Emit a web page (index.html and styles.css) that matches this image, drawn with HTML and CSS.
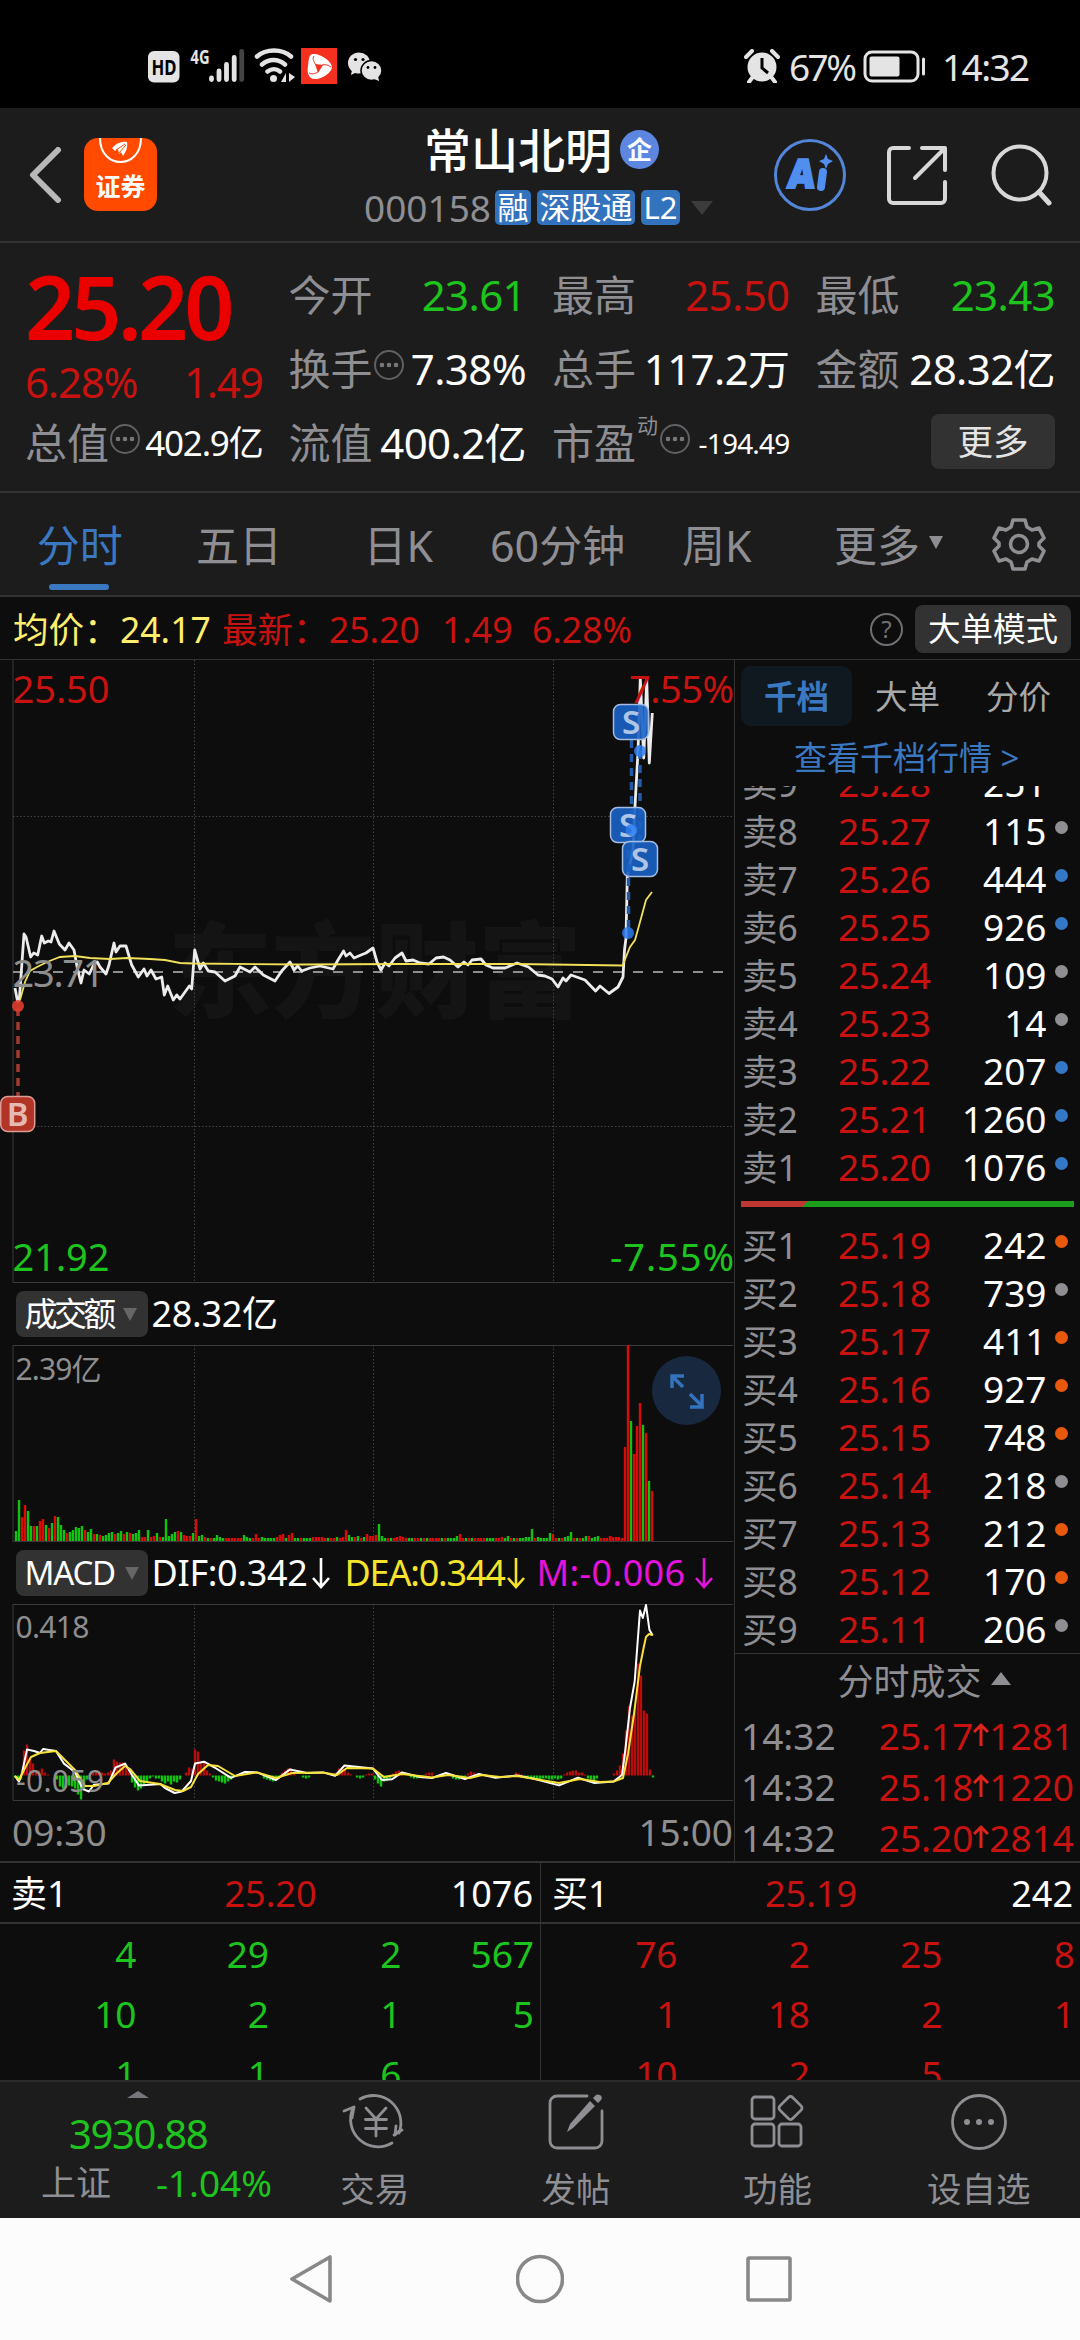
FILE: index.html
```
<!DOCTYPE html>
<html lang="zh-CN">
<head>
  <meta charset="UTF-8">
  <title>常山北明 000158</title>
  <link rel="stylesheet" href="styles.css">
</head>
<body>
  <div class="status-bar">
    <svg class="status-left" viewBox="140 40 260 50">
      <rect x="148" y="51" width="31.500" height="31.500" rx="6" fill="#e4e4e4"/>
      <text x="151.500" y="74.500" font-size="21" font-weight="700" fill="#000" textLength="25" lengthAdjust="spacingAndGlyphs">HD</text>
      <text x="190.500" y="63.500" font-size="20" font-weight="700" fill="#e4e4e4" textLength="19" lengthAdjust="spacingAndGlyphs">4G</text>
      <g stroke="#e4e4e4" stroke-width="4.800" stroke-linecap="round">
        <path d="M211.500 78v1.500M219 71v8.500M226.500 64.500v15M234.200 57.500v22"/>
        <path d="M241.700 51.500v28" stroke="#444"/>
      </g>
      <g fill="none" stroke="#e4e4e4" stroke-width="4.500" stroke-linecap="round">
        <path d="M257 56.500c9-8 25-8 34 0M262 64.500c7-6 16-6 23 0M267.500 71.500c4-3 9-3 12.500 0"/>
      </g>
      <circle cx="273.500" cy="78.500" r="3.500" fill="#e4e4e4"/>
      <path d="M286 73v9h-5zM289 82v-9l6 4z" fill="#e4e4e4"/>
      <rect x="301" y="48" width="36" height="36" fill="#f5301e"/>
      <path d="M312 54c9-1 20 8 20 13s-10 13-18 12c-6-1-7-7-6-13 1-5 0-10 4-12z" fill="#fff"/>
      <path d="M315 64l8 1-5 8z" fill="#f5301e"/>
      <path d="M309 73c4 2 8 0 10-2M314 56c-2 3 0 6 2 9M322 65c3-1 6 0 9 2" stroke="#f5301e" fill="none"/>
      <ellipse cx="359" cy="63" rx="11" ry="10.500" fill="#e4e4e4"/>
      <path d="M352 70l-1 5 6-3z" fill="#e4e4e4"/>
      <circle cx="355.500" cy="59.500" r="1.600"/><circle cx="363" cy="59.500" r="1.600"/>
      <ellipse cx="371.500" cy="70.500" rx="10.500" ry="10" fill="#e4e4e4" stroke="#000" stroke-width="1.500"/>
      <path d="M374 79l5 2-1-5z" fill="#e4e4e4"/>
      <circle cx="368" cy="67.500" r="1.400"/><circle cx="375" cy="67.500" r="1.400"/>
    </svg>
    <svg class="alarm" viewBox="0 0 36 34">
      <circle cx="18" cy="18" r="14.500" fill="#e4e4e4"/>
      <path d="M2 8l6-6M34 8l-6-6M8 29l-3 4M28 29l3 4" stroke="#e4e4e4" stroke-width="4" stroke-linecap="round"/>
      <path d="M18 9v10l6 5" stroke="#000" stroke-width="3" fill="none"/>
    </svg>
    <span class="battery-text">67%</span>
    <svg class="battery" viewBox="0 0 64 34">
      <rect x="2" y="2" width="53" height="29" rx="7" fill="none" stroke="#e4e4e4" stroke-width="3"/>
      <rect x="6.500" y="6.500" width="30" height="20" rx="2" fill="#e4e4e4"/>
      <path d="M60.500 9v15" stroke="#e4e4e4" stroke-width="3" stroke-linecap="round"/>
    </svg>
    <span class="clock">14:32</span>
  </div>

  <header class="header">
    <div class="header-left">
      <svg class="back" viewBox="0 0 34 56"><path d="M29 3L4 28l25 25" fill="none" stroke="#b8b8b8" stroke-width="6" stroke-linecap="round" stroke-linejoin="round"/></svg>
      <div class="broker">
        <svg viewBox="0 0 73 34">
          <path d="M16 0c0 32 41 32 41 0" fill="none" stroke="#fff" stroke-width="2"/>
          <path d="M28 10c5-5 9-7 15-6 1 5-1 10-4 14l-2-4-2 2-1-5-3 2z" fill="#fff"/>
          <path d="M32 12l9-6M35 15l7-8" stroke="#ff4a00"/>
        </svg>
        <span>证券</span>
      </div>
    </div>
    <div class="title">
      <div class="name">常山北明<span class="corp">企</span></div>
      <div class="code">
        <span class="num">000158</span>
        <span class="tag">融</span>
        <span class="tag">深股通</span>
        <span class="tag">L2</span>
        <i class="caret"></i>
      </div>
    </div>
    <div class="header-right">
      <svg class="ai" viewBox="0 0 74 74">
        <circle cx="37" cy="37" r="34.500" fill="none" stroke="#5386d8" stroke-width="3"/>
        <text x="15" y="50" font-size="40" font-weight="900" fill="#508ff0" stroke="#508ff0" stroke-width="2" textLength="27" lengthAdjust="spacingAndGlyphs" transform="skewX(-6) translate(4 0)">A</text>
        <path d="M50 34l-2 15" stroke="#508ff0" stroke-width="8" stroke-linecap="round"/>
        <path d="M53 16l2 5 5 2-5 3-2 5-2-5-5-3 5-2z" fill="#508ff0"/>
      </svg>
      <svg class="share" viewBox="0 0 60 60">
        <path d="M22 3H6a4 4 0 0 0-4 4v47a4 4 0 0 0 4 4h48a4 4 0 0 0 4-4V37M35 3h23v22M57 4L28 33" fill="none" stroke="#d8d8d8" stroke-width="4" stroke-linecap="round" stroke-linejoin="round"/>
      </svg>
      <svg class="search" viewBox="0 0 62 62">
        <circle cx="29" cy="29" r="26.500" fill="none" stroke="#d8d8d8" stroke-width="4"/>
        <path d="M48 48l10 11" stroke="#d8d8d8" stroke-width="5" stroke-linecap="round"/>
      </svg>
    </div>
  </header>

  <section class="quote">
    <div class="quote-col first">
      <div class="last-price">25.20</div>
      <div class="change"><span>6.28%</span><span>1.49</span></div>
      <div class="row small"><label>总值</label><i class="dots"></i><b>402.9亿</b></div>
    </div>
    <div class="quote-col">
      <div class="row"><label>今开</label><b class="green">23.61</b></div>
      <div class="row"><label>换手</label><i class="dots"></i><b>7.38%</b></div>
      <div class="row"><label>流值</label><b>400.2亿</b></div>
    </div>
    <div class="quote-col">
      <div class="row"><label>最高</label><b class="red">25.50</b></div>
      <div class="row"><label>总手</label><b>117.2万</b></div>
      <div class="row tiny"><label>市盈</label><sup>动</sup><i class="dots"></i><b>-194.49</b></div>
    </div>
    <div class="quote-col">
      <div class="row"><label>最低</label><b class="green">23.43</b></div>
      <div class="row"><label>金额</label><b>28.32亿</b></div>
      <div class="row"><button class="more">更多</button></div>
    </div>
  </section>

  <nav class="tabs">
    <a class="tab active">分时</a>
    <a class="tab">五日</a>
    <a class="tab">日K</a>
    <a class="tab">60分钟</a>
    <a class="tab">周K</a>
    <a class="tab tab-more">更多<i class="caret"></i></a>
    <svg class="gear" viewBox="0 0 54 54" fill="none" stroke="#8e8e93" stroke-width="3.600" stroke-linejoin="round">
      <path d="M21 3h12l2 7 5 3 7-2 5 10-5 5v3l5 5-5 10-7-2-5 3-2 7H21l-2-7-5-3-7 2-5-10 5-5v-3l-5-5L7 11l7 2 5-3z"/>
      <circle cx="27" cy="27" r="8.500"/>
    </svg>
  </nav>

  <div class="info">
    <span class="avg">均价：</span><span class="avg v1">24.17</span>
    <span class="red">最新：</span><span class="red v2">25.20</span>
    <span class="red v3">1.49</span><span class="red v4">6.28%</span>
    <i class="help">?</i>
    <button class="mode">大单模式</button>
  </div>

  <main class="main">
    <div class="charts">
      <svg class="price-chart" viewBox="0 0 734 623">
        <text class="watermark" x="168" y="350" textLength="414">东方财富</text>
        <path class="frame" d="M13 0V622.500H734"/>
        <path class="grid" d="M194.500 0V622M373.500 0V622M553.500 0V622M13 156.500H733M13 466.500H733"/>
        <path class="zero" d="M13 312H733"/>
        <polyline class="price-line" points="15,328 17.7,342 19.3,340 24,274 26,277 30.7,297 33.7,293 37.7,295 41.7,276 44.3,283 48.3,281 51,282 54,271 59.3,284 65,290 69,283 74,290 77.3,308 81,323 84,310 89.3,314 94,304 97.3,302 100,307 106,314 109,305 114,283 116,292 120,286 126,286 131.7,305 138.3,317 144,309 147,316 151,310 156,319 161.7,317 164.3,335 167.7,326 173.3,340 176.7,335 180,339 189.3,326 191.7,329 194.7,290 200,309 203.3,303 208.3,311 215,312 225,321 235,316 240,307 250,312 255,307 263.3,315 275,321 281.7,311 290,302 294,310 297.7,306 301.7,311 310,308 320,306 333,309 338,300 343.6,291 346,296 350,293 354,298 361,295 366,293 373,288 377,302 381,310 385,303 389,306 395,298 402,293 406,301 413,300 420,303 429,304 436,298 443.6,297 450,300 458,307 464,302 468,305 472,300 481,299 486,305 493,308 505,308 517,303 528.5,307 538,315 545,316 552,319 558,327 563,318 566,321 571,315 585,320 595.6,331 600,326 609,333.5 618,327 623,317 624.5,290 626,278 627.3,216 633,190 635,146 638,92 640.3,18 643.7,98 646.7,20 649.3,103 652.3,53"/>
        <polyline class="avg-line" points="20,340 25,322 30,311 37,307 45,303 52,300 60,297 75,296 90,298 110,299 127,298 150,299 165,300 180,303 194,303.5 300,304.5 400,304 517,304 622.5,305.5 630,287 635,280 640,262 646,240 652,232"/>
        <g class="buy">
          <path d="M18 348V437"/>
          <circle cx="18" cy="346" r="6"/>
          <rect x="0.700" y="436.500" width="34" height="35" rx="7"/>
          <text x="17.500" y="466">B</text>
        </g>
        <g class="sell">
          <path d="M631.500 80V168M640 91V182M628.500 190V273"/>
          <rect x="613.500" y="44.500" width="35" height="35" rx="7"/>
          <text x="631" y="74">S</text>
          <rect x="610.500" y="147.500" width="35" height="35" rx="7"/>
          <text x="628" y="177">S</text>
          <rect x="622.500" y="181.500" width="35" height="35" rx="7"/>
          <text x="640" y="211">S</text>
          <circle cx="640" cy="91" r="6"/>
          <circle cx="631.500" cy="170" r="6"/>
          <circle cx="628" cy="273" r="6"/>
        </g>
        <text class="axis red-t" x="12.500" y="43" textLength="97">25.50</text>
        <text class="axis red-t" x="629" y="43" textLength="105">7.55%</text>
        <text class="axis" x="12.500" y="326.500" textLength="92">23.71</text>
        <text class="axis green-t" x="12.500" y="611" textLength="97">21.92</text>
        <text class="axis green-t" x="610" y="611" textLength="124">-7.55%</text>
      </svg>

      <div class="legend">
        <span class="chip">成交额<i class="caret"></i></span>
        <span class="amount">28.32亿</span>
      </div>
      <div class="volume">
        <svg viewBox="0 0 734 197">
          <path class="frame" d="M733 0.500H13V196.500H733"/>
          <path class="grid" d="M194.500 0V196M373.500 0V196M553.500 0V196"/>
          <g id="volume-bars"></g>
          <text class="axis sm" x="15.500" y="34.500" textLength="86">2.39亿</text>
        </svg>
        <svg class="expand" viewBox="0 0 69 69">
          <circle cx="34.500" cy="34.500" r="34.500" fill="#18293f"/>
          <path d="M31 31L20 20M20 32V20h12M38 38l12 12M38 51h12V38" fill="none" stroke="#3373bd" stroke-width="3.500"/>
        </svg>
      </div>

      <div class="legend">
        <span class="chip macd-chip">MACD<i class="caret"></i></span>
        <span class="dif">DIF:0.342</span><svg class="down" viewBox="0 0 20 32"><path d="M10 1v28M2 21l8 9 8-9"/></svg>
        <span class="dea">DEA:0.344</span><svg class="down dea" viewBox="0 0 20 32"><path d="M10 1v28M2 21l8 9 8-9"/></svg>
        <span class="m">M:-0.006</span><svg class="down m" viewBox="0 0 20 32"><path d="M10 1v28M2 21l8 9 8-9"/></svg>
      </div>
      <svg class="macd" viewBox="0 0 734 197">
        <path class="frame" d="M733 0.500H13V196.500H733"/>
        <path class="grid" d="M194.500 0V196M373.500 0V196M553.500 0V196"/>
        <g id="macd-bars"></g>
        <polyline class="dif-line" points="15,172 19,177.6 22,169 27,145.5 34,147 40,149 43,145 56,147 64,159.6 71,165 75.5,169 82.6,185 89,187.5 94,180.7 108.5,179.5 115.6,163.5 125,159.6 132,171 139,181.4 160.4,180 165,184 174.6,189 181.7,187.5 191,177 195,159.6 204,157.7 214.7,163.5 231,173.8 245,168 257,168.4 276,176 290,165.4 307,169 323,168.4 335,171.9 344.5,161.5 373,164.6 382,176 392,175.3 402,168.4 420,173 432,174 446,169 465,175 479,170 495.5,173.8 517,171.5 533,174.5 559,181.4 578,173.8 594.6,179 613.5,177.6 622,171 625.3,146 630,104 634.7,77.3 640,6.5 642.8,14 646,1 649.4,25.7 652.7,31.4"/>
        <polyline class="dea-line" points="15,172 19,176 25,164 31,153 40,149 56,147 65,156 75,166 85,182 94,182 108,179 116,170 125,162 130,165 140,177 160,180 175,186 183,187 191,183 198,170 208,161 218,162 235,172 257,168.4 276,174 292,169 323,168.4 337,171 347,164 373,164.6 384,173 402,170 432,173.5 448,171 470,174 482,171 500,173 517,172 559,179 580,175 600,178 613.5,177.6 623,174 628,150 634,110 640,62 644,42 646,33 649,30 652.7,31"/>
        <text class="axis sm" x="15.500" y="33.500" textLength="74">0.418</text>
        <text class="axis sm" x="16" y="188" textLength="88">-0.059</text>
      </svg>
      <div class="times"><span>09:30</span><span>15:00</span></div>
    </div>

    <aside class="book">
      <div class="book-tabs"><a class="on">千档</a><a>大单</a><a>分价</a></div>
      <a class="book-link">查看千档行情 &gt;</a>
      <div class="levels asks" id="asks"></div>
      <svg class="ratio" viewBox="0 0 333 6"><rect width="333" height="6" fill="#1c9c1c"/><path d="M0 0h67l-6 6H0z" fill="#bf3733"/></svg>
      <div class="levels" id="bids"></div>
      <div class="deals-title">分时成交<i></i></div>
      <div class="deals" id="deals"></div>
    </aside>
  </main>

  <section class="queue">
    <div class="queue-half">
      <div class="queue-head"><span>卖1</span><span class="red">25.20</span><span>1076</span></div>
      <div class="queue-grid green">
        <span>4</span><span>29</span><span>2</span><span>567</span>
        <span>10</span><span>2</span><span>1</span><span>5</span>
        <span>1</span><span>1</span><span>6</span>
      </div>
    </div>
    <div class="queue-half">
      <div class="queue-head"><span>买1</span><span class="red">25.19</span><span>242</span></div>
      <div class="queue-grid red">
        <span>76</span><span>2</span><span>25</span><span>8</span>
        <span>1</span><span>18</span><span>2</span><span>1</span>
        <span>10</span><span>2</span><span>5</span>
      </div>
    </div>
  </section>

  <footer class="toolbar">
    <div class="index">
      <i class="up"></i>
      <div class="index-value">3930.88</div>
      <div class="index-row"><span>上证</span><span class="green">-1.04%</span></div>
    </div>
    <div class="tool">
      <svg viewBox="0 0 66 60">
        <path d="M18 7A27.500 27.500 0 0 1 57 41M60 38l-8 5M58 38l-5 5 1-9M50 51A27.500 27.500 0 0 1 11 16M10 26L12 15 2 19"/>
        <path d="M24 16l10 11 10-11M23.500 27.500h21M23.500 36.500h21M34 27v17"/>
      </svg>
      <span>交易</span>
    </div>
    <div class="tool">
      <svg viewBox="0 0 66 60">
        <path d="M44 4H14a7 7 0 0 0-7 7v38a7 7 0 0 0 7 7h38a7 7 0 0 0 7-7V19"/>
        <path d="M47 9l5 5-22 22-6 4 3-8zM50 6l3-3c3-2 8 2 5 5l-3 3z" fill="#8e8e93" stroke="none"/>
      </svg>
      <span>发帖</span>
    </div>
    <div class="tool">
      <svg viewBox="0 0 66 60">
        <rect x="8" y="5" width="22" height="22" rx="3"/>
        <rect x="8" y="32" width="22" height="22" rx="3"/>
        <rect x="35" y="32" width="22" height="22" rx="3"/>
        <rect x="37.500" y="7" width="18" height="18" rx="3" transform="rotate(45 46.500 16)"/>
      </svg>
      <span>功能</span>
    </div>
    <div class="tool">
      <svg viewBox="0 0 66 60">
        <circle cx="33" cy="30" r="26.500"/>
        <g fill="#8e8e93" stroke="none"><circle cx="21" cy="30" r="3"/><circle cx="33" cy="30" r="3"/><circle cx="45" cy="30" r="3"/></g>
      </svg>
      <span>设自选</span>
    </div>
  </footer>

  <div class="sysnav">
    <svg viewBox="0 0 48 52"><path d="M43 4v44L5 26z"/></svg>
    <svg viewBox="0 0 48 52"><circle cx="24" cy="26" r="22.500"/></svg>
    <svg viewBox="0 0 48 52"><rect x="3" y="5" width="42" height="42" rx="1"/></svg>
  </div>

  <script src="script.js"></script>
</body>
</html>
```
FILE: styles.css
```
* {
  box-sizing: border-box;
}

body {
  margin: 0;
  width: 1080px;
  height: 2340px;
  overflow: hidden;
  background: #0d0d0d;
  color: #fff;
  font-family: "Noto Sans", "Noto Sans CJK SC", sans-serif;
  font-size: 37px;
}

svg {
  display: block;
  flex: none;
}

i {
  font-style: normal;
}

button {
  border: none;
  padding: 0;
  font-family: inherit;
  color: #fff;
  background: #323232;
  border-radius: 8px;
}

.red { color: #c8120f; }
.green { color: #1ec41e; }

.caret {
  width: 0;
  height: 0;
  border: 7.5px solid transparent;
  border-bottom: none;
  border-top: 13px solid #666;
}

/* status bar */
.status-bar {
  height: 108px;
  background: #000;
  display: flex;
  align-items: flex-start;
  padding: 40px 0 0 140px;
  color: #e4e4e4;
  line-height: 52px;
}

.status-left {
  width: 260px;
  height: 50px;
}

.alarm {
  width: 36px;
  height: 34px;
  margin: 9px 0 0 344px;
}

.battery-text {
  width: 75px;
  margin-left: 9px;
  letter-spacing: -2.6px;
  margin-top: 1px;
}

.battery {
  width: 64px;
  height: 34px;
  margin: 10px 15px 0 -1px;
}

.clock {
  letter-spacing: -1.6px;
  margin-top: 1px;
}

/* header */
.header {
  height: 135px;
  background: #1c1c1c;
  border-bottom: 2px solid #333;
  display: flex;
  align-items: center;
}

.header-left {
  width: 364px;
  padding-left: 29px;
  display: flex;
  align-items: center;
  gap: 21px;
}

.back {
  width: 34px;
  height: 56px;
}

.broker {
  width: 73px;
  height: 73px;
  border-radius: 14px;
  background: #ff4a00;
  font-family: "Noto Sans CJK SC", sans-serif;
  font-weight: 700;
  font-size: 25px;
  line-height: 26px;
  text-align: center;
}

.broker svg {
  width: 73px;
  height: 34px;
}

.title {
  width: 409px;
  padding-top: 4px;
}

.name {
  height: 62px;
  display: flex;
  align-items: center;
  padding-left: 60px;
  font-size: 47px;
  font-weight: 500;
  line-height: 60px;
}

.corp {
  width: 39px;
  height: 39px;
  margin-left: 8px;
  border-radius: 50%;
  background: #5d86e0;
  font-size: 25px;
  font-weight: 700;
  line-height: 38px;
  text-align: center;
}

.code {
  height: 54px;
  display: flex;
  align-items: center;
  gap: 6px;
}

.num {
  color: #8e8e93;
  width: 125px;
}

.tag {
  height: 35px;
  padding: 0 2.5px;
  border-radius: 5px;
  background: #3373bd;
  font-size: 31px;
  line-height: 34px;
}

.code .caret {
  margin-left: 5px;
  border-width: 14px 11px 0;
  border-top-color: #3c3c3c;
}

.header-right {
  display: flex;
  align-items: center;
}

.ai { width: 74px; height: 74px; }
.share { width: 60px; height: 60px; margin-left: 40px; }
.search { width: 62px; height: 62px; margin-left: 44px; }

/* quote block */
.quote {
  height: 250px;
  background: #1c1c1c;
  border-bottom: 2px solid #333;
  display: flex;
  padding: 15px 25px 0;
  line-height: 74px;
  font-size: 42px;
}

.quote-col {
  width: 238px;
  margin-left: 26px;
}

.quote-col.first {
  width: 238px;
  margin-left: 0;
}

.quote-col:last-child {
  width: 240px;
}

.last-price {
  height: 87px;
  line-height: 96px;
  font-size: 88px;
  font-weight: 600;
  letter-spacing: -4px;
  color: #eb0000;
}

.change {
  height: 61px;
  line-height: 73px;
  display: flex;
  justify-content: space-between;
  color: #c8120f;
}

.change span {
  letter-spacing: -1.2px;
}

.row {
  height: 74px;
  display: flex;
  align-items: center;
  white-space: nowrap;
}

.row label {
  color: #8e8e93;
}

.row b {
  font-weight: 400;
  margin-left: auto;
  letter-spacing: -0.6px;
}

.row.small b { font-size: 35px; letter-spacing: -1.2px; }
.row.tiny b { font-size: 28px; letter-spacing: -0.8px; }

.row sup {
  width: 22px;
  margin: -36px 0 0 1px;
  font-size: 21px;
  line-height: 24px;
  color: #8e8e93;
}

.dots {
  width: 30px;
  height: 30px;
  margin: -8px 0 0 1px;
  border: 2px solid #606064;
  border-radius: 50%;
  background:
    radial-gradient(circle, #77777b 2px, transparent 2.6px) -7px 0 / 100% 100% no-repeat,
    radial-gradient(circle, #77777b 2px, transparent 2.6px) 0 0 / 100% 100% no-repeat,
    radial-gradient(circle, #77777b 2px, transparent 2.6px) 7px 0 / 100% 100% no-repeat;
}

.more {
  width: 124px;
  height: 55px;
  margin: -4px 0 0 auto;
  font-size: 35.5px;
  line-height: 52px;
  color: #e4e4e4;
}

/* period tabs */
.tabs {
  height: 104px;
  background: #1c1c1c;
  border-bottom: 2px solid #333;
  display: flex;
  align-items: center;
}

.tab {
  position: relative;
  width: 159.3px;
  padding-top: 3px;
  text-align: center;
  font-size: 43px;
  line-height: 99px;
  color: #8e8e93;
}

.tab.active {
  color: #3a78c2;
}

.tab.active::after {
  content: "";
  position: absolute;
  left: 49px;
  bottom: 5px;
  width: 60px;
  height: 6px;
  border-radius: 3px;
  background: #3a78c2;
}

.tab-more {
  display: flex;
  align-items: center;
  justify-content: center;
  gap: 9px;
  width: 184px;
}

.tab-more .caret {
  margin-top: -6px;
  border-top-color: #8e8e93;
}

.gear {
  width: 54px;
  height: 54px;
  margin-left: 12px;
}

/* avg / last line */
.info {
  height: 63px;
  border-bottom: 1px solid #333;
  display: flex;
  align-items: center;
  padding: 2px 0 0 13px;
  font-size: 35.5px;
  line-height: 60px;
  white-space: nowrap;
}

.avg { color: #ffee6c; }
.info > span:nth-child(odd) { width: 107px; }
.info > span.v1 { width: 102px; }
.info > span.v2 { width: 113px; }
.info > span.v3 { width: 90px; }

.help {
  width: 33px;
  height: 33px;
  margin-left: auto;
  border: 2px solid #707074;
  border-radius: 50%;
  color: #707074;
  font-size: 24px;
  line-height: 28px;
  text-align: center;
}

.mode {
  width: 156px;
  height: 48px;
  margin: 0 9px 0 12px;
  font-size: 32.5px;
  line-height: 46px;
}

/* charts */
.main {
  height: 1203px;
  border-bottom: 2px solid #333;
  display: flex;
}

.charts {
  width: 734px;
}

.price-chart {
  width: 734px;
  height: 623px;
}

.frame {
  fill: none;
  stroke: #3a3a3a;
}

.grid {
  stroke: #444;
  stroke-dasharray: 1.5 2;
}

.zero {
  stroke: #8e8e8e;
  stroke-width: 2;
  stroke-dasharray: 10 10;
}

.watermark {
  font-size: 104px;
  font-weight: 900;
  fill: #141414;
}

.price-line {
  fill: none;
  stroke: #ececec;
  stroke-width: 2.8;
  stroke-linejoin: round;
}

.avg-line {
  fill: none;
  stroke: #f0e05a;
  stroke-width: 1.8;
}

.dif-line, .dea-line {
  fill: none;
  stroke: #fff;
  stroke-width: 2;
  stroke-linejoin: round;
}

.dea-line { stroke: #f8e23a; }

.buy text, .sell text {
  font-size: 33px;
  font-weight: 600;
  text-anchor: middle;
  fill: #fff;
  fill-opacity: 0.68;
}

.buy path, .sell path {
  fill: none;
  stroke: #2459a5;
  stroke-width: 3.5;
  stroke-dasharray: 8 6;
}

.buy rect, .sell rect {
  fill: #1a62c6;
  fill-opacity: 0.9;
  stroke: #a5bde0;
  stroke-width: 1.5;
}

.sell circle { fill: #2d7df0; fill-opacity: 0.85; }
.buy path { stroke: #a33a30; }
.buy circle { fill: #e03c2c; fill-opacity: 0.9; }
.buy rect { fill: #c4382a; stroke: #dc9c94; }

.axis {
  font-size: 38px;
  fill: #8e8e8e;
}

.axis.sm { font-size: 30px; }
.axis.red-t { fill: #c8120f; }
.axis.green-t { fill: #1ec41e; }

.legend {
  height: 62px;
  display: flex;
  align-items: center;
  padding-left: 15.5px;
  font-size: 36px;
  line-height: 60px;
  white-space: nowrap;
}

.chip {
  width: 132px;
  height: 46px;
  margin-right: 4px;
  padding-left: 9px;
  border-radius: 8px;
  background: #323232;
  display: flex;
  align-items: center;
  gap: 10px;
  font-size: 33px;
  letter-spacing: -3.6px;
}

.macd-chip {
  letter-spacing: -1.2px;
}

.amount { letter-spacing: -0.3px; }
.dif { width: 159px; letter-spacing: -0.3px; }
span.dea { width: 161px; letter-spacing: -1.2px; color: #f5e32c; }
span.m { width: 157px; letter-spacing: 0.4px; color: #e312dc; }

.down {
  width: 20px;
  height: 32px;
  margin-right: 14px;
  fill: none;
  stroke: #fff;
  stroke-width: 2.6;
}

.down.dea { stroke: #f5e32c; margin-right: 11px; }
.down.m { stroke: #e312dc; }

.volume {
  position: relative;
  height: 197px;
}

.volume svg {
  width: 734px;
  height: 197px;
}

.volume .expand {
  position: absolute;
  left: 652px;
  top: 11px;
  width: 69px;
  height: 69px;
}

.macd {
  width: 734px;
  height: 197px;
}

.rise { fill: #dc0a06; }
.fall { fill: #0fc40f; }
#macd-bars .rise { fill: #b80d0a; }

.times {
  height: 62px;
  padding: 2px 1px 0 12px;
  display: flex;
  justify-content: space-between;
  line-height: 58px;
  color: #8e8e8e;
}

/* order book */
.book {
  width: 346px;
  border-left: 1px solid #333;
  padding-left: 6px;
}

.book-tabs {
  display: flex;
  padding-top: 6px;
}

.book-tabs a {
  width: 111px;
  height: 60px;
  border-radius: 10px;
  text-align: center;
  font-size: 32.5px;
  line-height: 61px;
  color: #a8a8a8;
}

.book-tabs .on {
  background: #101820;
  color: #3a78c2;
  font-weight: 700;
}

.book-link {
  display: block;
  height: 60px;
  padding-left: 53px;
  font-size: 33px;
  line-height: 64px;
  color: #3a78c2;
  white-space: nowrap;
}

.levels {
  height: 438px;
  padding-top: 6px;
  line-height: 48px;
  overflow: hidden;
}

.asks {
  height: 409px;
  padding-top: 0;
  display: flex;
  flex-direction: column;
  justify-content: flex-end;
  padding-bottom: 4px;
}

.level {
  flex: none;
  height: 48px;
  display: flex;
  align-items: center;
}

.level label {
  width: 97px;
  padding-left: 1px;
  font-size: 35.5px;
  color: #8e8e93;
}

.level .vol {
  width: 208.5px;
  display: flex;
  justify-content: space-between;
  letter-spacing: -0.4px;
}

.level .vol b {
  font-weight: 400;
  letter-spacing: 0;
  color: #fff;
}

.dot {
  width: 13px;
  height: 13px;
  margin: -7px 0 0 8px;
  border-radius: 50%;
  background: #8e8e93;
}

.dot.blue { background: #3477c4; }
.dot.orange { background: #e9590c; }

.ratio {
  width: 333px;
  height: 6px;
  margin: 6px 0 8px;
}

.deals-title {
  height: 57px;
  margin-left: -6px;
  border-top: 1px solid #333;
  display: flex;
  justify-content: center;
  align-items: center;
  gap: 9px;
  padding: 0 0 0 33px;
  font-size: 36px;
  line-height: 52px;
  color: #8e8e93;
}

.deals-title i {
  border: 10px solid transparent;
  border-top: none;
  border-bottom: 13px solid #8e8e93;
  margin-top: -8px;
}

.deal {
  height: 51px;
  display: flex;
  align-items: center;
  padding-right: 6px;
  line-height: 50px;
}

.deal .time {
  width: 138px;
  color: #8e8e93;
}

.deal svg {
  width: 16px;
  height: 24px;
  margin: -4px auto 0;
  fill: none;
  stroke: #e0231c;
  stroke-width: 3;
}

/* best level queues */
.queue {
  height: 219px;
  display: flex;
  overflow: hidden;
  border-bottom: 2px solid #2a2a2a;
}

.queue-half {
  width: 540px;
  flex: none;
}

.queue-half + .queue-half {
  border-left: 1px solid #333;
}

.queue-head {
  height: 61px;
  border-bottom: 2px solid #333;
  padding: 3px 7px 0 11px;
  display: grid;
  grid-template-columns: 1fr 120px 1fr;
  align-items: center;
  line-height: 56px;
  font-size: 36px;
}

.queue-head span:last-child {
  text-align: right;
}

.queue-head .red {
  text-align: center;
  padding-right: 3px;
}

.queue-grid {
  display: grid;
  grid-template-columns: repeat(4, 132.5px);
  padding: 0 0 0 4px;
  text-align: right;
  line-height: 60px;
}

/* bottom toolbar */
.toolbar {
  height: 136px;
  background: #1c1c1c;
  display: flex;
  line-height: 44px;
}

.index {
  width: 274px;
  padding-top: 9px;
}

.up {
  display: block;
  width: 0;
  margin-left: 127px;
  border: 11px solid transparent;
  border-top: none;
  border-bottom: 7px solid #77777b;
}

.index-value {
  padding: 14px 0 0 69px;
  font-size: 40px;
  letter-spacing: -1.4px;
  color: #1ec41e;
}

.index-row {
  display: flex;
  justify-content: space-between;
  padding: 5px 2px 0 41px;
  font-size: 35px;
  color: #8e8e93;
}

.index-row .green {
  font-size: 37px;
  color: #1ec41e;
}

.tool {
  width: 201.4px;
  display: flex;
  flex-direction: column;
  align-items: center;
  padding-top: 10px;
  gap: 15px;
  font-size: 34.5px;
  color: #8e8e93;
}

.tool svg {
  width: 66px;
  height: 60px;
  fill: none;
  stroke: #8e8e93;
  stroke-width: 2.8;
  stroke-linecap: round;
  stroke-linejoin: round;
}

/* system navigation */
.sysnav {
  height: 122px;
  background: #fcfcfc;
  display: flex;
  justify-content: center;
  align-items: center;
  gap: 181px;
}

.sysnav svg {
  width: 48px;
  height: 52px;
  fill: none;
  stroke: #888;
  stroke-width: 3.6;
  stroke-linejoin: round;
}
```
FILE: script.js
```
const asks = [
  [9, "25.28", 251, ""], [8, "25.27", 115, ""], [7, "25.26", 444, "blue"],
  [6, "25.25", 926, "blue"], [5, "25.24", 109, ""], [4, "25.23", 14, ""],
  [3, "25.22", 207, "blue"], [2, "25.21", 1260, "blue"], [1, "25.20", 1076, "blue"]
];
const bids = [
  [1, "25.19", 242, "orange"], [2, "25.18", 739, ""], [3, "25.17", 411, "orange"],
  [4, "25.16", 927, "orange"], [5, "25.15", 748, "orange"], [6, "25.14", 218, ""],
  [7, "25.13", 212, "orange"], [8, "25.12", 170, "orange"], [9, "25.11", 206, ""]
];
const deals = [["25.17", 1281], ["25.18", 1220], ["25.20", 2814]];

function levelRows(side, rows) {
  return rows.map(([n, price, vol, dot]) => `
    <div class="level">
      <label>${side}${n}</label>
      <span class="vol red">${price}<b>${vol}</b></span>
      <i class="dot ${dot}"></i>
    </div>`).join("");
}

document.getElementById("asks").innerHTML = levelRows("卖", asks);
document.getElementById("bids").innerHTML = levelRows("买", bids);
document.getElementById("deals").innerHTML = deals.map(([price, vol]) => `
  <div class="deal red">
    <span class="time">14:32</span><span>${price}</span>
    <svg viewBox="0 0 16 24"><path d="M8 24V3M1 10l7-7 7 7"/></svg>
    <span>${vol}</span>
  </div>`).join("");

// one bar per minute, 3px apart; negative = fall
const bar = (x, y, h, cls) => `<rect x="${x - 1.2}" y="${y}" width="2.4" height="${h}" class="${cls}"/>`;

const volume = [
  -10, -41, 24, 36, -30, -15, 15, -15, 20, 22, -16, 13, -18, 25, -24, -16, -11, 8, -9, -11,
  -14, -13, -15, 11, -9, -12, 7, -7, 6, -5, -6, -8, -9, 7, -8, -10, 7, -9, 8, -7,
  -8, -11, 4, 4, -11, 4, 5, -8, 4, -4, -22, -5, -7, -9, 10, -9, 6, 5, 5, -8,
  22, -5, -6, 4, -3, 3, -3, -6, -4, -3, 3, 3, 3, 3, 3, 3, -6, -4, -3, 3,
  7, 3, -4, -3, -3, -3, -3, 4, 6, 7, -3, 6, 8, -3, -3, 3, -3, -3, -3, 4,
  4, 4, 4, 3, -3, 3, 3, -4, 3, 4, 11, -6, -4, 4, -5, 3, -4, 7, 5, 5,
  6, -17, -5, -3, 3, -3, 3, 4, 5, 4, 3, -3, -3, 3, 3, -3, 3, -3, 3, 3,
  3, 3, -3, 3, -3, -3, -3, -5, 7, 3, -3, 3, -3, 3, 3, 3, 3, -3, -3, -3,
  3, 3, 4, -3, -5, 3, -3, 3, -3, -3, -4, -4, -12, 3, -4, -3, -3, -3, -8, 7,
  3, -3, 3, -4, -5, -9, 3, -3, 3, -3, -5, 5, -3, -4, -5, 3, 3, 3, 5, 4
];
volume.push(4, 4, 3, 94, 196, -120, 87, 115, 138, -116, 108, -60, 50);
document.getElementById("volume-bars").innerHTML = volume.map((v, i) =>
  bar(16 + i * 3, 196 - Math.abs(v), Math.abs(v), v > 0 ? "rise" : "fall")).join("");

// [start x, heights...]
const macd = [
  [15, -2, -5, -4, 25, 31, 18, 12, 4, 5, 7, 3, 1],
  [57, -4, -11, -13, -12, -10, -11, -13, -19, -24, -13, -4],
  [93, 3, 5, 4, 3, 2, 3, 5, 16, 14, 13, 13, 8, 3],
  [132, -7, -12, -15, -13, -9, -6, -3, -1, -3, -3, -6, -8, -6, -9, -6, -7, -4],
  [186, 3, 8, 7, 26, 24, 13, 14, 5, 2],
  [213, -2, -5, -6, -7, -8, -6, -4],
  [264, -3, -4, -5, -6, -4, -2, 3, 5, 7, 7, 3],
  [303, -2, -3, -2],
  [336, 3, 7, 8, 6, 3, 1],
  [357, -2, -3, -2, 1, 2, 2, -4, -8, -11, -6, -5, -3, 2, 4, 5, 3],
  [411, -2, -3, -3, -2, -2, 2, 3, 3],
  [453, -3, -4, -4, -3, -1, 2, 4, 3],
  [516, 3, 2, 1, -1, -2, -3, -4, -4, -4, -3, -3, -4, -4, -3, -4, -3, 1, 3, 4, 5, 5, 3, 3, 1, -3, -4, -6, -3],
  [614, 2, 5, 10, 22, 45, 69, 60, 70, 112, 100, 65, 62, 6, -2]
];
document.getElementById("macd-bars").innerHTML = macd.map(([x0, ...hs]) => hs.map((h, i) =>
  bar(x0 + i * 3, h > 0 ? 171.5 - h : 171.5, Math.abs(h), h > 0 ? "rise" : "fall")).join("")).join("");
```
